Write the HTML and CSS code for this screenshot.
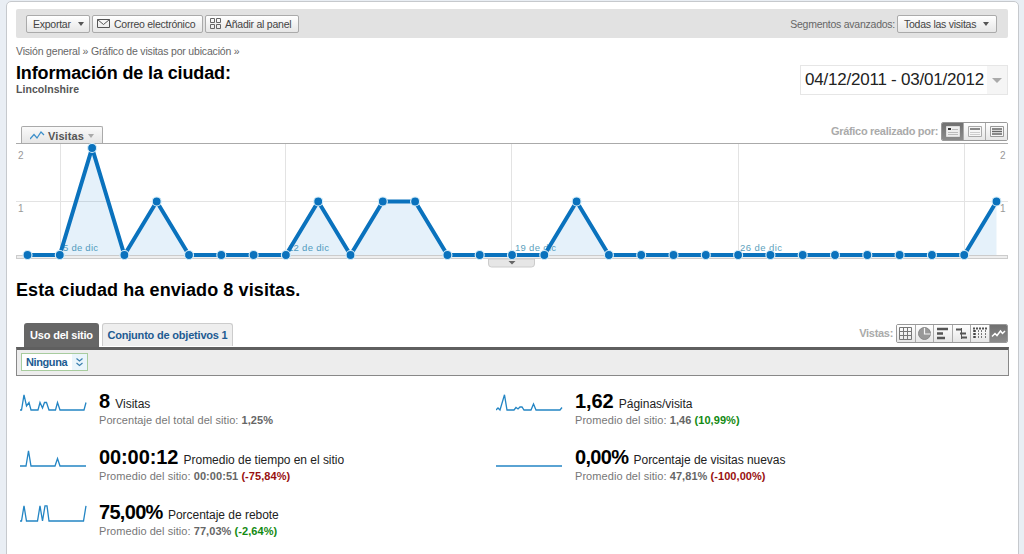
FILE: index.html
```html
<!DOCTYPE html>
<html lang="es">
<head>
  <meta charset="UTF-8" />
  <title>Información de la ciudad: Lincolnshire</title>
  <link rel="stylesheet" href="styles.css">
</head>
<body>
  <div class="page">
    <div class="toolbar">
      <button class="btn export">Exportar <i class="arrow"></i></button>
      <button class="btn mail">
        <svg width="14" height="10" viewBox="0 0 14 10"><path d="M.5.5h12v8H.5zM.5.5l6 5 6-5" fill="none" stroke="#555"/></svg>
        Correo electrónico
      </button>
      <button class="btn add">
        <svg width="12" height="11" viewBox="0 0 12 11"><path d="M.5.5h4v4h-4zM6.5.5h4v4h-4zM.5 6.5h4v4h-4zM6.5 6.5h4v4h-4z" fill="none" stroke="#666"/></svg>
        Añadir al panel
      </button>
      <span class="segments">Segmentos avanzados:</span>
      <button class="btn visits">Todas las visitas <i class="arrow"></i></button>
    </div>

    <div class="heading">
      <div>
        <div class="breadcrumb">Visión general » Gráfico de visitas por ubicación »</div>
        <h1>Información de la ciudad:</h1>
        <div class="city">Lincolnshire</div>
      </div>
      <div class="date">
        <span class="range">04/12/2011 - 03/01/2012</span>
        <span class="date-arrow"><i class="arrow"></i></span>
      </div>
    </div>

    <div class="chart-head">
      <div class="metric-tab">
        <svg width="15" height="9" viewBox="0 0 15 9"><path d="M0 8L4 3.500 7 7l4-6 3 3" fill="none" stroke="#3c8fca" stroke-width="1.200"/></svg>
        Visitas <i class="arrow"></i>
      </div>
      <div class="option-row">
        <span class="label">Gráfico realizado por:</span>
        <div class="group graph-by">
          <span class="on"><svg width="14" height="11" viewBox="0 0 14 11"><path d="M.5.5h13v10H.5z" fill="#eee" stroke="#ddd"/><path d="M2 3h3" stroke="#333" stroke-width="2"/><path d="M6 3.500h6M2 6.500h10M2 8.500h10" stroke="#bbb"/></svg></span>
          <span><svg width="14" height="11" viewBox="0 0 14 11"><path d="M.5.5h13v10H.5z" fill="#f6f6f6" stroke="#aaa"/><path d="M2 3h10" stroke="#666" stroke-width="1.500"/><path d="M2 6.500h10M2 8.500h10" stroke="#ccc"/></svg></span>
          <span><svg width="14" height="11" viewBox="0 0 14 11"><path d="M.5.5h13v10H.5z" fill="#f6f6f6" stroke="#999"/><path d="M2 3h10M2 5.500h10M2 8h10" stroke="#666" stroke-width="1.500"/></svg></span>
        </div>
      </div>
    </div>

    <div class="chart">
      <svg id="chart" width="992" height="126" viewBox="16 143 992 126">
        <path class="grid" d="M16 201.500h992M60.500 144v111M285.500 144v111M511.500 144v111M738.500 144v111M964.500 144v111"/>
        <rect class="rail" x="16.500" y="255.500" width="991" height="3"/>
        <path class="top" d="M16 143.500h992"/>
        <path class="handle" d="M488.500 259v5q0 3 3 3h40q3 0 3-3v-5z"/>
        <path d="M508.500 261h7l-3.500 3.500z" fill="#666"/>
        <g class="axis">
          <text x="18" y="159">2</text><text x="18" y="212">1</text>
          <text x="1000" y="159">2</text><text x="1000" y="212">1</text>
        </g>
        <g class="dates">
          <text x="63" y="251" textLength="35">5 de dic</text>
          <text x="288" y="251" textLength="41">12 de dic</text>
          <text x="515" y="251" textLength="41">19 de dic</text>
          <text x="740" y="251" textLength="42">26 de dic</text>
        </g>
      </svg>
    </div>

    <h2>Esta ciudad ha enviado 8 visitas.</h2>

    <div class="tabs">
      <span class="tab active">Uso del sitio</span>
      <span class="tab goals">Conjunto de objetivos 1</span>
      <div class="option-row views-row">
        <span class="label">Vistas:</span>
        <div class="group views">
          <span><svg width="13" height="13" viewBox="0 0 13 13"><path d="M.5.5h12v12H.5zM4.500 0v13M8.500 0v13M0 4.500h13M0 8.500h13" fill="none" stroke="#777"/></svg></span>
          <span><svg width="13" height="13" viewBox="0 0 13 13"><circle cx="6.500" cy="6.500" r="6" fill="#999" stroke="#888"/><path d="M6.500 1v6h6" fill="none" stroke="#f5f5f5" stroke-width="1.200"/></svg></span>
          <span><svg width="13" height="13" viewBox="0 0 13 13"><path d="M1 2h11M1 6.500h6M1 11h8" stroke="#555" stroke-width="2.500"/></svg></span>
          <span><svg width="13" height="13" viewBox="0 0 13 13"><path d="M1 2.500h5M5 6.500h6M7 10.500h5" stroke="#555" stroke-width="2"/><path d="M6.500 1v11" stroke="#555"/></svg></span>
          <span><svg width="14" height="12" viewBox="0 0 14 12"><path d="M0 1.500h14" stroke="#555" stroke-width="2" stroke-dasharray="2 1"/><path d="M1.500 3v9" stroke="#444" stroke-width="2.500" stroke-dasharray="2 1"/><path d="M5.500 3v9M8.500 3v9M12.500 3v9" stroke="#777" stroke-dasharray="2 1"/></svg></span>
          <span class="on"><svg width="15" height="9" viewBox="0 0 15 9"><path d="M1 7.500l3-3 2 2 3.500-4.500 2 2.500L14 2" fill="none" stroke="#fff" stroke-width="1.500"/></svg></span>
        </div>
      </div>
    </div>

    <div class="filter">
      <div class="select">
        <span>Ninguna</span>
        <i><svg width="9" height="9" viewBox="0 0 9 9"><path d="M1.500.500l3 2.500 3-2.500M1.500 5l3 2.500 3-2.500" fill="none" stroke="#3a7fae" stroke-width="1.200"/></svg></i>
      </div>
    </div>

    <div class="metrics">
      <div class="metric">
        <svg class="spark" width="67" height="18" viewBox="0 0 67 18"><path d="M0 16h1.500L4 .800 6.500 12 9 8.500 11 16h7l2-7.500L22.500 14l2-5.500h2L29 16h6.500l2-7.500L40 16h24l2-7.500"/></svg>
        <div>
          <div class="value"><b>8</b> Visitas</div>
          <div class="avg">Porcentaje del total del sitio: <b>1,25%</b></div>
        </div>
      </div>
      <div class="metric">
        <svg class="spark" width="67" height="18" viewBox="0 0 67 18"><path d="M0 16l2-2 2 2L8.500.800 11 16h7l2-2.500 2 1.500 2-2h2l2 3h7l2.500-6L40 16h24l2-2.500"/></svg>
        <div>
          <div class="value"><b>1,62</b> Páginas/visita</div>
          <div class="avg">Promedio del sitio: <b>1,46</b> <b class="good">(10,99%)</b></div>
        </div>
      </div>
      <div class="metric">
        <svg class="spark" width="67" height="18" viewBox="0 0 67 18"><path d="M0 16h6L8.500.800 11 16h24l2.500-7.500L40 16h26"/></svg>
        <div>
          <div class="value"><b>00:00:12</b> Promedio de tiempo en el sitio</div>
          <div class="avg">Promedio del sitio: <b>00:00:51</b> <b class="bad">(-75,84%)</b></div>
        </div>
      </div>
      <div class="metric">
        <svg class="spark" width="67" height="18" viewBox="0 0 67 18"><path d="M0 16h66"/></svg>
        <div>
          <div class="value percent"><b>0,00%</b> Porcentaje de visitas nuevas</div>
          <div class="avg">Promedio del sitio: <b>47,81%</b> <b class="bad">(-100,00%)</b></div>
        </div>
      </div>
      <div class="metric">
        <svg class="spark" width="67" height="18" viewBox="0 0 67 18"><path d="M0 16h1.500L4 .800 6.500 16h11L20 .800 22.500 16 25 .800h2L29 16h34.500L66 .800"/></svg>
        <div>
          <div class="value percent"><b>75,00%</b> Porcentaje de rebote</div>
          <div class="avg">Promedio del sitio: <b>77,03%</b> <b class="good">(-2,64%)</b></div>
        </div>
      </div>
    </div>
  </div>

  <script>
    // visits per day, 4 Dec - 3 Jan
    const visits = [0,0,2,0,1,0,0,0,0,1,0,1,1,0,0,0,0,1,0,0,0,0,0,0,0,0,0,0,0,0,1];
    const points = visits.map((v, i) => [27.5 + i * 32.3, 255 - v * 53.5]);
    const line = 'M' + points.map(p => p.join(' ')).join('L');
    const chart = document.getElementById('chart');

    function draw(tag, attrs) {
      const el = document.createElementNS('http://www.w3.org/2000/svg', tag);
      for (const name in attrs) el.setAttribute(name, attrs[name]);
      chart.appendChild(el);
    }

    draw('path', { class: 'area', d: line + 'V255H27.5Z' });
    draw('path', { class: 'line', d: line });
    points.forEach(p => draw('circle', { class: 'dot', cx: p[0], cy: p[1], r: 4.5 }));
  </script>
</body>
</html>
```
FILE: styles.css
```css
* {
  box-sizing: border-box;
}

body {
  margin: 0;
  height: 554px;
  overflow: hidden;
  background: #e9eef4;
  font-family: "Liberation Sans", Arial, sans-serif;
  font-size: 11px;
  color: #666;
}

.page {
  width: 1013px;
  height: 570px;
  margin: 1px 0 0 6px;
  padding: 8px 9px 0 9px;
  background: #fff;
  border: 1px solid #c6c9cd;
  border-radius: 5px;
  white-space: nowrap;
}

.toolbar {
  display: flex;
  align-items: center;
  height: 29px;
  width: 992px;
  padding: 0 11px 0 10px;
  background: #e2e2e2;
  border-radius: 2px;
  margin-top: -1px;
}

.btn {
  display: flex;
  align-items: center;
  height: 18px;
  margin: 0 2px 0 0;
  padding: 0 0 0 6px;
  border: 1px solid #aaa;
  border-radius: 2px;
  background: linear-gradient(#fff, #e6e6e6);
  font: 10.5px "Liberation Sans", Arial, sans-serif;
  letter-spacing: -0.25px;
  color: #444;
  white-space: nowrap;
}

.export { width: 64px; }
.mail { width: 111px; padding-left: 4px; }
.add { width: 94px; padding-left: 4px; }
.visits { width: 100px; margin: 0; }
.mail svg, .add svg { margin-right: 3px; }

.arrow {
  border: 3.5px solid transparent;
  border-top: 4px solid #555;
  border-bottom: 0;
  margin-left: 7px;
}

.segments {
  margin: 0 2px 0 auto;
  font-size: 10.5px;
  letter-spacing: -0.25px;
}

.heading {
  display: flex;
  justify-content: space-between;
  height: 88px;
  width: 992px;
}

.breadcrumb {
  margin-top: 6px;
  line-height: 14px;
  font-size: 10.5px;
  letter-spacing: -0.18px;
}

h1 {
  margin: 3px 0 0;
  font-size: 18px;
  line-height: 24px;
  letter-spacing: -0.13px;
  color: #000;
}

.city {
  font-weight: bold;
  line-height: 12px;
  margin-top: -2px;
  font-size: 10.5px;
  letter-spacing: 0.05px;
  color: #555;
}

.date {
  display: flex;
  width: 208px;
  height: 30px;
  margin-top: 27px;
  border: 1px solid #e6e6e6;
}

.range {
  flex: 1;
  padding-left: 4px;
  font-size: 17px;
  line-height: 28px;
  letter-spacing: -0.22px;
  color: #222;
}

.date-arrow {
  display: flex;
  align-items: center;
  justify-content: center;
  width: 20px;
  background: #f5f5f5;
}

.date-arrow .arrow {
  margin: 0;
  border-width: 5px 5px 0;
  border-top-color: #aaa;
}

.chart-head {
  display: flex;
  justify-content: space-between;
  height: 17px;
  width: 992px;
  padding-left: 5px;
}

.metric-tab {
  display: flex;
  align-items: center;
  width: 82px;
  height: 18px;
  padding-left: 8px;
  border: 1px solid #aaa;
  border-bottom: 0;
  border-radius: 2px 2px 0 0;
  background: linear-gradient(#fafafa, #e4e4e4);
  font-weight: bold;
  letter-spacing: 0.1px;
  color: #555;
}

.metric-tab svg { margin-right: 3px; }
.metric-tab .arrow { margin-left: 4px; border-top-color: #aaa; }

.option-row {
  display: flex;
  align-items: center;
  height: 20px;
  margin-top: -5px;
  font-weight: bold;
  letter-spacing: -0.3px;
  color: #aaa;
}

.group {
  display: flex;
  height: 19px;
  margin-left: 3px;
  border: 1px solid #999;
  border-radius: 2px;
  overflow: hidden;
}

.group span {
  display: flex;
  align-items: center;
  justify-content: center;
  flex: 1;
  background: linear-gradient(#fff, #e6e6e6);
  border-left: 1px solid #aaa;
}

.group span:first-child { border-left: 0; }
.group .on { background: linear-gradient(#707070, #8c8c8c); }
.graph-by { width: 67px; }
.views { width: 112px; }

.chart svg {
  display: block;
}

.grid { stroke: #e3e3e3; }
.top { stroke: #aaa; }
.rail { fill: #eee; stroke: #ccc; }
.handle { fill: #e6e6e6; stroke: #ccc; }
.axis { font-size: 10px; fill: #999; }
.dates { font-size: 9.5px; fill: #5c9fbd; }
.area { fill: #0077cc; fill-opacity: 0.1; }
.line { fill: none; stroke: #0a72bd; stroke-width: 4; }
.dot { fill: #0a72bd; stroke: #d5edf9; stroke-width: 1.2; }

h2 {
  margin: 9px 0 0;
  font-size: 18px;
  line-height: 24px;
  letter-spacing: 0.1px;
  color: #000;
}

.tabs {
  display: flex;
  height: 24px;
  width: 992px;
  margin-top: 21px;
  padding-left: 8px;
}

.tab {
  height: 23px;
  line-height: 23px;
  text-align: center;
  font-weight: bold;
  letter-spacing: -0.2px;
  border-radius: 3px 3px 0 0;
}

.active {
  width: 75px;
  height: 24px;
  line-height: 25px;
  background: #666;
  color: #fff;
}

.goals {
  width: 131px;
  margin-left: 3px;
  background: #eee;
  border: 1px solid #ccc;
  border-bottom: 0;
  color: #1d5b92;
}

.views-row {
  margin: 0 0 0 auto;
}

.filter {
  width: 993px;
  height: 29px;
  padding: 3px 4px;
  background: #ededed;
  border: 1px solid #888;
  border-top: 3px solid #5f5f5f;
}

.select {
  display: flex;
  width: 67px;
  height: 18px;
  border: 1px solid #a8cc9e;
  background: #fff;
  font-weight: bold;
  line-height: 17px;
  letter-spacing: -0.4px;
  color: #1d5b92;
}

.select span {
  flex: 1;
  padding-left: 4px;
}

.select i {
  display: flex;
  align-items: center;
  justify-content: center;
  width: 15px;
  background: #eaf5fb;
}

.metrics {
  display: grid;
  grid-template-columns: 476px 476px;
  grid-auto-rows: 55.7px;
  padding: 15px 0 0 4px;
}

.metric {
  display: flex;
}

.spark {
  width: 67px;
  margin: 3px 12px 0 0;
  fill: none;
  stroke: #2385c4;
  stroke-width: 1.3;
}

.value {
  height: 23px;
  font-size: 12px;
  line-height: 20px;
  letter-spacing: -0.03px;
  color: #222;
}

.value b {
  margin-right: 2px;
  font-size: 20px;
  letter-spacing: -0.1px;
  color: #000;
}

.percent b {
  letter-spacing: -0.7px;
}

.avg {
  line-height: 13px;
  letter-spacing: 0.06px;
  color: #777;
}

.avg b { color: #666; }
.avg .good { color: #128a12; }
.avg .bad { color: #990f0f; }
```
